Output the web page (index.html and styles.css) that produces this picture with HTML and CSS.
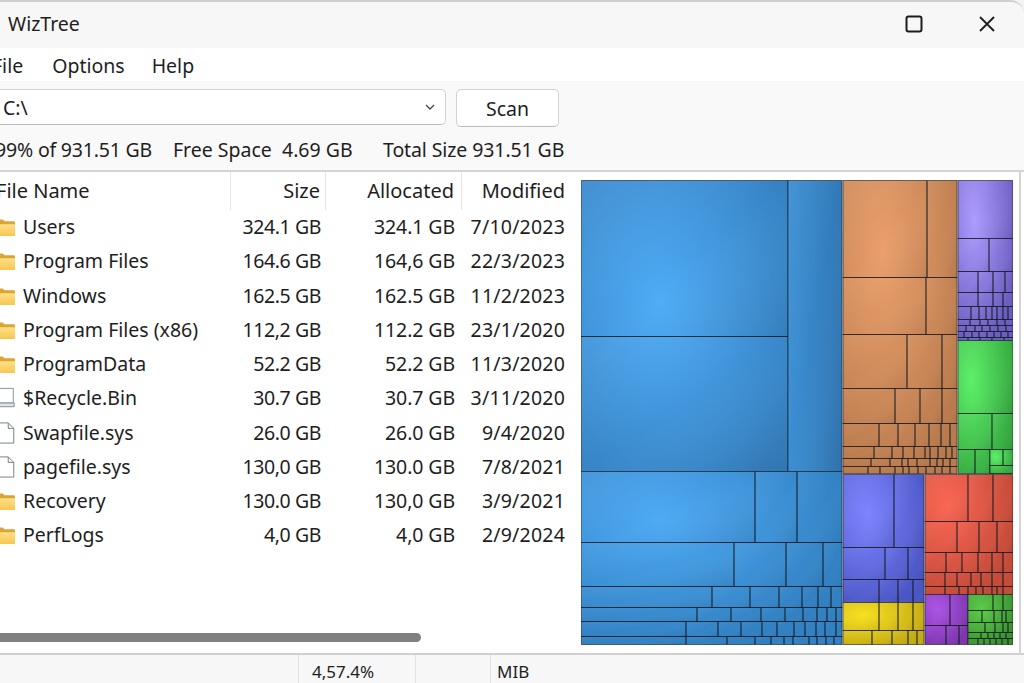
FILE: index.html
```html
<!DOCTYPE html>
<html lang="en">
<head>
<meta charset="utf-8">
<title>WizTree</title>
<link rel="stylesheet" href="styles.css">
</head>
<body>

<svg class="defs" width="0" height="0">
  <defs>
    <linearGradient id="folderfront" x1="0" y1="0" x2="0" y2="1">
      <stop offset="0" stop-color="#ffe08a"/><stop offset="1" stop-color="#f8c64e"/>
    </linearGradient>
  </defs>
  <symbol id="folder" viewBox="0 0 20 20">
    <path d="M0 3.500C0 2.500.6 2 1.500 2H7l2 2h9.500c.9 0 1.500.6 1.500 1.500V18c0 .9-.6 1.500-1.500 1.500h-17C.6 19.500 0 18.900 0 18z" fill="#dca432"/>
    <path d="M0 7h20v11c0 .9-.6 1.500-1.500 1.500h-17C.6 19.500 0 18.900 0 18z" fill="url(#folderfront)"/>
  </symbol>
  <symbol id="bin" viewBox="0 0 20 24">
    <path d="M1.500 1.500h17v16h-17z" fill="#fff" stroke="#7d8a94"/>
    <path d="M.5 17.500h19v4H.5z" fill="#dfe3e6" stroke="#7d8a94"/>
  </symbol>
  <symbol id="page" viewBox="0 0 20 24">
    <path d="M.5 1h12.500l6 6v16H.5z" fill="#fff" stroke="#6e7880"/>
    <path d="M13 1v6h6" fill="none" stroke="#6e7880"/>
  </symbol>
</svg>

<div class="window">
  <div class="titlebar">
    <span class="title">WizTree</span>
    <svg class="winbtn max" width="18" height="18" viewBox="0 0 18 18"><rect x="1.500" y="1.500" width="15" height="15" rx="2" fill="none" stroke="#1c1c1c" stroke-width="2"/></svg>
    <svg class="winbtn close" width="18" height="18" viewBox="0 0 18 18"><path d="M2 2l14 14M16 2L2 16" fill="none" stroke="#1c1c1c" stroke-width="1.800"/></svg>
  </div>

  <div class="menubar">
    <span class="file">File</span>
    <span>Options</span>
    <span>Help</span>
  </div>

  <div class="toolbar">
    <div class="scanrow">
      <div class="combo">
        <span>C:\</span>
        <svg width="10" height="6" viewBox="0 0 10 6"><path d="M1 1l4 4 4-4" fill="none" stroke="#444" stroke-width="1.300"/></svg>
      </div>
      <div class="scan">Scan</div>
    </div>
    <div class="summary">
      <span class="used">99% of 931.51 GB</span>
      <span class="free">Free Space&nbsp; 4.69 GB</span>
      <span class="total">Total Size 931.51 GB</span>
    </div>
  </div>

  <div class="client">
    <div class="list">
      <div class="row head">
        <div class="name">File Name</div>
        <div class="size">Size</div>
        <div class="alloc">Allocated</div>
        <div class="mod">Modified</div>
      </div>
      <div class="row">
        <div class="name"><svg class="ico"><use href="#folder"/></svg>Users</div>
        <div class="size">324.1 GB</div><div class="alloc">324.1 GB</div><div class="mod">7/10/2023</div>
      </div>
      <div class="row">
        <div class="name"><svg class="ico"><use href="#folder"/></svg>Program Files</div>
        <div class="size">164.6 GB</div><div class="alloc">164,6 GB</div><div class="mod">22/3/2023</div>
      </div>
      <div class="row">
        <div class="name"><svg class="ico"><use href="#folder"/></svg>Windows</div>
        <div class="size">162.5 GB</div><div class="alloc">162.5 GB</div><div class="mod">11/2/2023</div>
      </div>
      <div class="row">
        <div class="name"><svg class="ico"><use href="#folder"/></svg>Program Files (x86)</div>
        <div class="size">112,2 GB</div><div class="alloc">112.2 GB</div><div class="mod">23/1/2020</div>
      </div>
      <div class="row">
        <div class="name"><svg class="ico"><use href="#folder"/></svg>ProgramData</div>
        <div class="size">52.2 GB</div><div class="alloc">52.2 GB</div><div class="mod">11/3/2020</div>
      </div>
      <div class="row">
        <div class="name"><svg class="ico"><use href="#bin"/></svg>$Recycle.Bin</div>
        <div class="size">30.7 GB</div><div class="alloc">30.7 GB</div><div class="mod">3/11/2020</div>
      </div>
      <div class="row">
        <div class="name"><svg class="ico"><use href="#page"/></svg>Swapfile.sys</div>
        <div class="size">26.0 GB</div><div class="alloc">26.0 GB</div><div class="mod">9/4/2020</div>
      </div>
      <div class="row">
        <div class="name"><svg class="ico"><use href="#page"/></svg>pagefile.sys</div>
        <div class="size">130,0 GB</div><div class="alloc">130.0 GB</div><div class="mod">7/8/2021</div>
      </div>
      <div class="row">
        <div class="name"><svg class="ico"><use href="#folder"/></svg>Recovery</div>
        <div class="size">130.0 GB</div><div class="alloc">130,0 GB</div><div class="mod">3/9/2021</div>
      </div>
      <div class="row">
        <div class="name"><svg class="ico"><use href="#folder"/></svg>PerfLogs</div>
        <div class="size">4,0 GB</div><div class="alloc">4,0 GB</div><div class="mod">2/9/2024</div>
      </div>
      <div class="hscroll"><div class="thumb"></div></div>
    </div>

    <div class="map">
      <svg id="treemap" width="432" height="465" viewBox="581 179.500 432 465">
        <defs>
          <linearGradient id="bevel" x1="0" y1="0" x2="1" y2="1">
            <stop offset="0" stop-color="#fff" stop-opacity=".05"/>
            <stop offset=".5" stop-color="#fff" stop-opacity="0"/>
            <stop offset="1" stop-color="#000" stop-opacity=".07"/>
          </linearGradient>
          <radialGradient id="g-blue" cx=".3" cy=".27" r=".75">
            <stop offset="0" stop-color="#4eaaf4"/><stop offset="1" stop-color="#3180c2"/>
          </radialGradient>
          <radialGradient id="g-bluetop" cx=".38" cy=".42" r=".75">
            <stop offset="0" stop-color="#4eacf6"/><stop offset="1" stop-color="#347fc0"/>
          </radialGradient>
          <linearGradient id="g-blueside" x1="0" y1="0" x2="1" y2="0">
            <stop offset="0" stop-color="#3c8fd4"/><stop offset="1" stop-color="#3178b6"/>
          </linearGradient>
          <radialGradient id="g-orange" cx=".35" cy=".25" r=".8">
            <stop offset="0" stop-color="#eb9f6c"/><stop offset="1" stop-color="#b97a4c"/>
          </radialGradient>
          <radialGradient id="g-violet" cx=".3" cy=".25" r=".8">
            <stop offset="0" stop-color="#ad9bff"/><stop offset="1" stop-color="#6a5cc0"/>
          </radialGradient>
          <radialGradient id="g-green" cx=".25" cy=".3" r=".8">
            <stop offset="0" stop-color="#5cf068"/><stop offset="1" stop-color="#35a840"/>
          </radialGradient>
          <radialGradient id="g-indigo" cx=".3" cy=".3" r=".8">
            <stop offset="0" stop-color="#7c84ff"/><stop offset="1" stop-color="#4a55c4"/>
          </radialGradient>
          <radialGradient id="g-red" cx=".25" cy=".25" r=".8">
            <stop offset="0" stop-color="#fb6553"/><stop offset="1" stop-color="#c44a38"/>
          </radialGradient>
          <radialGradient id="g-yellow" cx=".25" cy=".3" r=".8">
            <stop offset="0" stop-color="#f8e020"/><stop offset="1" stop-color="#c4ac14"/>
          </radialGradient>
          <radialGradient id="g-purple" cx=".3" cy=".3" r=".8">
            <stop offset="0" stop-color="#ac54e6"/><stop offset="1" stop-color="#7c34ac"/>
          </radialGradient>
          <radialGradient id="g-leaf" cx=".3" cy=".3" r=".8">
            <stop offset="0" stop-color="#5ccc48"/><stop offset="1" stop-color="#38902e"/>
          </radialGradient>
        </defs>
      </svg>
    </div>
  </div>

  <div class="statusbar">
    <div class="cell wide"></div>
    <div class="cell pct">4,57.4%</div>
    <div class="cell blank"></div>
    <div class="cell unit">MIB</div>
  </div>
</div>

<script src="treemap.js"></script>
</body>
</html>
```

FILE: styles.css
```css
html, body {
  margin: 0;
  padding: 0;
  height: 100%;
  overflow: hidden;
  background: #f4f4f4;
}

body {
  font-family: "Noto Sans", "Open Sans", sans-serif;
  font-size: 19.5px;
  color: #1e1e1e;
}

.defs {
  display: block;
  height: 0;
}

.window {
  display: flex;
  flex-direction: column;
  width: 1032px;
  height: 683px;
  margin-left: -8px;
  background: #f8f8f8;
  border-top: 2px solid #cfcfcf;
  border-top-right-radius: 14px;
  box-sizing: border-box;
  overflow: hidden;
}

.titlebar {
  display: flex;
  align-items: center;
  height: 46px;
  padding: 0 28px 3px 16px;
  background: #f7f7f7;
  box-sizing: border-box;
  flex: none;
}

.title {
  flex: 1;
}

.winbtn.max {
  margin-right: 55px;
}

.menubar {
  display: flex;
  align-items: center;
  gap: 27px;
  height: 33px;
  padding-top: 2px;
  background: #fff;
  box-sizing: border-box;
  flex: none;
}

.file {
  margin-right: 2px;
}

.toolbar {
  height: 91px;
  background: #f9f9f9;
  flex: none;
  border-bottom: 2px solid #d4d4d4;
  box-sizing: border-box;
}

.scanrow {
  display: flex;
  align-items: flex-start;
  gap: 10px;
  padding-top: 8px;
}

.combo {
  display: flex;
  align-items: center;
  justify-content: space-between;
  width: 454px;
  height: 36px;
  padding: 0 10px 0 10px;
  background: #fff;
  border: 1px solid #d2d2d2;
  border-bottom-color: #bcbcbc;
  border-radius: 5px;
  box-sizing: border-box;
}

.scan {
  display: flex;
  align-items: center;
  justify-content: center;
  width: 103px;
  height: 38px;
  background: #fff;
  border: 1px solid #d2d2d2;
  border-bottom-color: #bcbcbc;
  border-radius: 5px;
  box-sizing: border-box;
}

.summary {
  display: flex;
  padding-top: 9px;
  white-space: nowrap;
}

.used {
  width: 160px;
  text-align: right;
  letter-spacing: -.2px;
}

.free {
  width: 200px;
  padding-left: 21px;
  box-sizing: border-box;
}

.total {
  margin-left: 31px;
  letter-spacing: -.1px;
}

.client {
  display: flex;
  flex: 1;
  min-height: 0;
  background: #fff;
}

.list {
  display: flex;
  flex-direction: column;
  width: 589px;
  flex: none;
}

.row {
  display: grid;
  grid-template-columns: 239px 95px 136px 111px;
  height: 34.25px;
  line-height: 34.25px;
  white-space: nowrap;
  flex: none;
}

.row.head {
  height: 38px;
  line-height: 38px;
  font-size: 20px;
}

.head > div {
  border-right: 1px solid #e4e4e4;
}

.head > .mod {
  border-right: 0;
}

.name {
  display: flex;
  align-items: center;
  padding-left: 4px;
}

.ico {
  width: 19px;
  height: 22px;
  margin-right: 8px;
  flex: none;
}

.size, .alloc, .mod {
  text-align: right;
  padding-right: 5px;
}

.size {
  letter-spacing: -.4px;
}

.alloc {
  padding-right: 7px;
  letter-spacing: -.1px;
}

.mod {
  padding-right: 8px;
  letter-spacing: .2px;
}

.head > .size, .head > .alloc, .head > .mod {
  letter-spacing: 0;
}

.hscroll {
  margin-top: auto;
  padding-bottom: 11px;
}

.thumb {
  width: 429px;
  height: 9px;
  background: #808080;
  border-radius: 5px;
}

.map {
  flex: 1;
  padding-top: 7.5px;
  border-right: 2px solid #d4d4d4;
  margin-right: 3px;
}

#treemap {
  display: block;
}

.statusbar {
  display: flex;
  height: 30px;
  line-height: 34px;
  font-size: 17px;
  background: #f7f7f7;
  border-top: 2px solid #d0d0d0;
  box-sizing: border-box;
  flex: none;
}

.cell {
  height: 100%;
  border-right: 1px solid #e2e2e2;
  box-sizing: border-box;
  white-space: nowrap;
}

.wide {
  width: 307px;
}

.pct {
  width: 117px;
  padding-left: 13px;
}

.blank {
  width: 75px;
}

.unit {
  padding-left: 6px;
  border-right: 0;
}
```

FILE: treemap.js
```js
// each region: gradient, x0, x1, then rows of [y0, y1, ...vertical splits]
const REGIONS = [
  ["bluetop", 581, 788, [[180,336],[336,471]]],
  ["blueside", 788, 842, [[180,471]]],
  ["blue", 581, 842, [
    [471,542,755,797],
    [542,586,734,786,823],
    [586,607,712,750,779,802,818,831],
    [607,621,697,731,761,785,803,817,827,836],
    [621,636,686,718,741,762,777,794,805,816,825,836],
    [636,644,686,727,755,771,784,793,809,817,826,834]
  ]],
  ["orange", 843, 957, [
    [180,277,927],
    [277,334,926],
    [334,388,907,942],
    [388,423,895,920,942],
    [423,446,879,898,915,929,941,950],
    [446,458,874,892,903,914,925,930,938,946,952],
    [458,466,871,890,902,908,917,930,937,943,950],
    [466,473,868,880,895,903,909,918,926,935,942,950]
  ]],
  ["violet", 958, 1013, [
    [180,238],
    [238,271,989],
    [271,292,978,993,1005],
    [292,306,978,993,1003],
    [306,319,971,979,986,992,997,1003,1008],
    [319,325,970,980,988,997,1005],
    [325,331,966,975,982,990,998,1006],
    [331,337,964,972,979,987,994,1001,1008],
    [337,340,968,980,992,1004]
  ]],
  ["green", 958, 1013, [
    [340,413],
    [413,449,992],
    [449,473,975,990]
  ]],
  ["green", 990, 1013, [[449,465,1003],[465,473]]],
  ["indigo", 843, 924, [
    [474,547,894],
    [547,579,885,908],
    [579,602,879,898,913]
  ]],
  ["yellow", 843, 924, [
    [602,630,879,898,913],
    [630,644,872,892,908,917]
  ]],
  ["red", 925, 1013, [
    [474,521,968,993],
    [521,552,957,979,997],
    [552,572,946,962,978,992,1003],
    [572,586,945,957,971,981,992,1003],
    [586,594,945,959,968,976,983,992,997,1003]
  ]],
  ["purple", 925, 968, [
    [594,625,950],
    [625,644,946,959]
  ]],
  ["leaf", 968, 1013, [
    [594,610,993,1003],
    [610,622,982,994,1002,1006],
    [622,632,985,995,1003,1008],
    [632,638,981,988,994,1000,1006],
    [638,644,978,984,990,996,1002,1008]
  ]]
];

const NS = "http://www.w3.org/2000/svg";
const map = document.getElementById("treemap");

function cell(x0, y0, x1, y1, fill, line) {
  var r = document.createElementNS(NS, "rect");
  r.setAttribute("x", x0);
  r.setAttribute("y", y0);
  r.setAttribute("width", x1 - x0);
  r.setAttribute("height", y1 - y0);
  r.setAttribute("fill", fill);
  if (line) {
    r.setAttribute("stroke", "#10181e");
    r.setAttribute("stroke-opacity", ".6");
    r.setAttribute("stroke-width", "1");
  }
  map.appendChild(r);
}

for (const [color, x0, x1, rows] of REGIONS) {
  const top = rows[0][0];
  const bottom = rows[rows.length - 1][1];
  cell(x0, top, x1, bottom, "url(#g-" + color + ")", false);
  for (const row of rows) {
    const edges = [x0, ...row.slice(2), x1];
    for (let i = 0; i < edges.length - 1; i++) {
      cell(edges[i], row[0], edges[i + 1], row[1], "url(#bevel)", true);
    }
  }
}
```
